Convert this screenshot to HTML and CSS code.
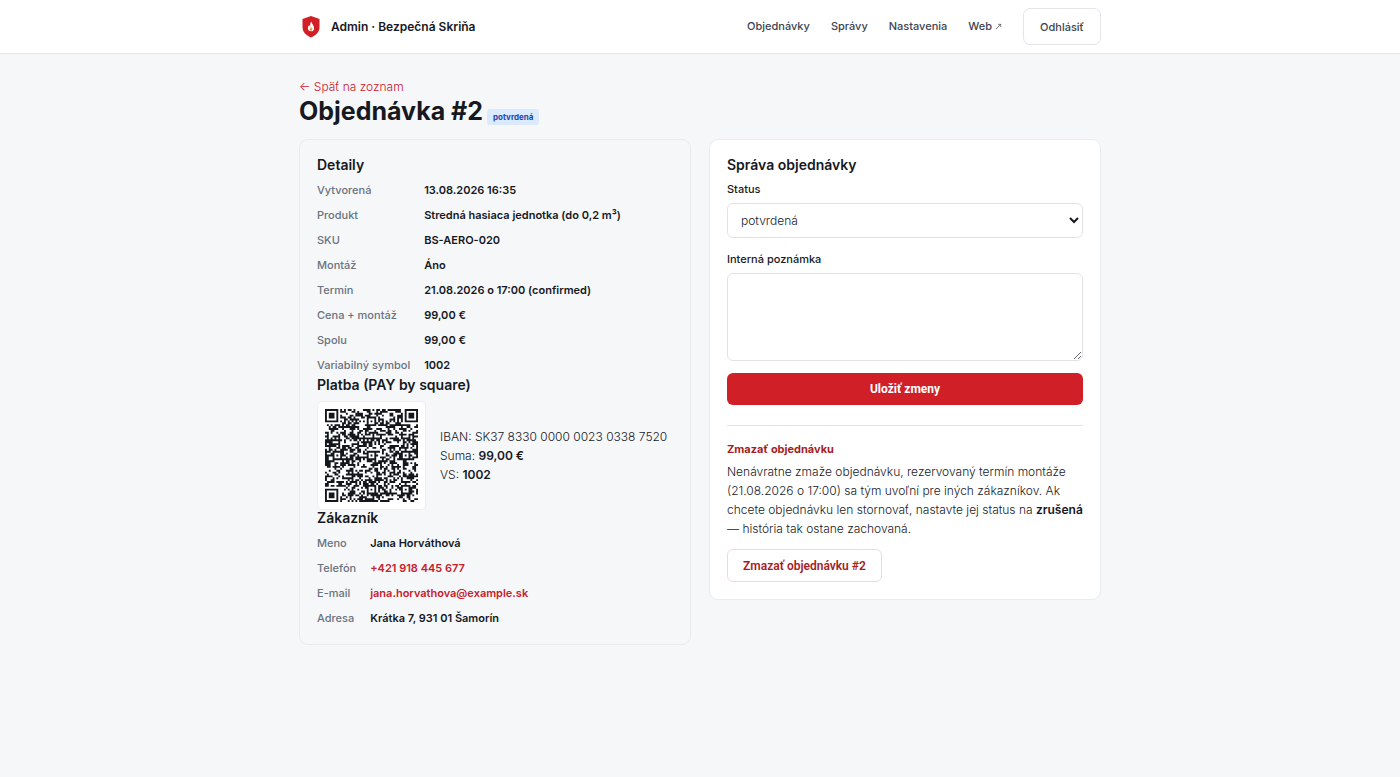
FILE: index.html
```html
<!DOCTYPE html>
<html lang="sk">
<head>
<meta charset="utf-8">
<meta name="viewport" content="width=device-width, initial-scale=1">
<title>Objednávka #2 – Admin · Bezpečná Skriňa</title>
<link rel="stylesheet" href="styles.css">
</head>
<body>
<header class="topbar">
  <div class="container topbar-inner">
    <a class="brand" href="#">
      <svg class="brand-mark" viewBox="0 0 24 24" aria-hidden="true">
        <path fill="#d01f27" d="M12 1 20.500 4V12c0 5.500-4 8.500-8.500 10.500C7.500 20.500 3.500 17.500 3.500 12V4Z"/>
        <path fill="#fff" d="M12.200 6.500c.4 2.200 2.900 3.800 2.900 6.700a3.100 3.100 0 0 1-6.200.1c0-1.500.6-2.400 1.300-3.200.2.800.5 1.200.9 1.500.2-1.900.1-3.500 1.100-5.100Z"/>
        <path fill="#f0a05a" d="M12.100 11.800c.3 1 1.300 1.600 1.300 2.700a1.400 1.400 0 0 1-2.800 0c0-1.100 1.100-1.700 1.500-2.700Z"/>
      </svg>
      <span>Admin · Bezpečná Skriňa</span>
    </a>
    <nav class="nav">
      <a href="#">Objednávky</a>
      <a href="#">Správy</a>
      <a href="#">Nastavenia</a>
      <a class="nav-web" href="#">Web
        <svg class="nav-arrow" viewBox="0 0 8 8" aria-hidden="true"><path d="M1 7 6.500 1.500M3.500 1.500h3v3" fill="none" stroke="currentColor" stroke-width=".8"/></svg>
      </a>
      <button class="btn-logout" type="button">Odhlásiť</button>
    </nav>
  </div>
</header>
<main class="container page">
  <a class="back" href="#">← Späť na zoznam</a>
  <div class="title-row">
    <h1>Objednávka #2</h1>
    <span class="badge">potvrdená</span>
  </div>
  <div class="columns">
    <section class="card card-muted">
      <h2>Detaily</h2>
      <dl class="facts">
        <dt>Vytvorená</dt><dd>13.08.2026 16:35</dd>
        <dt>Produkt</dt><dd>Stredná hasiaca jednotka (do 0,2 m³)</dd>
        <dt>SKU</dt><dd>BS-AERO-020</dd>
        <dt>Montáž</dt><dd>Áno</dd>
        <dt>Termín</dt><dd>21.08.2026 o 17:00 (confirmed)</dd>
        <dt>Cena + montáž</dt><dd>99,00 €</dd>
        <dt>Spolu</dt><dd>99,00 €</dd>
        <dt>Variabilný symbol</dt><dd>1002</dd>
      </dl>
      <h2>Platba (PAY by square)</h2>
      <div class="payment">
        <svg class="qr" id="qr" viewBox="0 0 49 49" role="img" aria-label="PAY by square"><path fill="#14171c"/></svg>
        <div class="payment-text">
          <div>IBAN: SK37 8330 0000 0023 0338 7520</div>
          <div>Suma: <strong>99,00 €</strong></div>
          <div>VS: <strong>1002</strong></div>
        </div>
      </div>
      <h2>Zákazník</h2>
      <dl class="facts">
        <dt>Meno</dt><dd>Jana Horváthová</dd>
        <dt>Telefón</dt><dd><a href="#">+421 918 445 677</a></dd>
        <dt>E-mail</dt><dd><a href="#">jana.horvathova@example.sk</a></dd>
        <dt>Adresa</dt><dd>Krátka 7, 931 01 Šamorín</dd>
      </dl>
    </section>
    <section class="card">
      <h2>Správa objednávky</h2>
      <form class="form">
        <label for="status">Status</label>
        <select id="status"><option>potvrdená</option><option>zrušená</option></select>
        <label for="note">Interná poznámka</label>
        <textarea id="note"></textarea>
        <button class="btn-save" type="button">Uložiť zmeny</button>
      </form>
      <div class="danger">
        <h3>Zmazať objednávku</h3>
        <p>Nenávratne zmaže objednávku, rezervovaný termín montáže (21.08.2026 o 17:00) sa tým uvoľní pre iných zákazníkov. Ak chcete objednávku len stornovať, nastavte jej status na <strong>zrušená</strong> — história tak ostane zachovaná.</p>
        <button class="btn-delete" type="button">Zmazať objednávku #2</button>
      </div>
    </section>
  </div>
</main>
<script src="qr.js"></script>
</body>
</html>
```
FILE: styles.css
```css
* { box-sizing: border-box; }
body {
  margin: 0;
  background: #f5f7f9;
  color: #16191f;
  font-family: Inter, "Liberation Sans", sans-serif;
  font-size: 12px;
  font-weight: 300;
  line-height: 19px;
}
a { color: #c8202c; text-decoration: none; }
h1, h2, h3, p, dl, dd { margin: 0; }
button, select, textarea { font-family: inherit; }
.container { width: 100%; max-width: 802px; margin: 0 auto; }

.topbar { background: #fff; border-bottom: 1px solid #e5e7eb; }
.topbar-inner { display: flex; align-items: center; justify-content: space-between; padding: 8px 0; }
.brand { display: flex; align-items: center; gap: 8px; color: #16191f; font-size: 12px; font-weight: 600; }
.brand-mark { width: 24px; height: 24px; }
.nav { display: flex; align-items: center; gap: 21px; font-size: 11px; font-weight: 500; }
.nav a { color: #3d4350; }
.nav-web { display: flex; align-items: center; gap: 3px; }
.nav-arrow { width: 7px; height: 7px; }
.btn-logout {
  height: 37px;
  padding: 0 16px;
  border: 1px solid #e2e5e9;
  border-radius: 7px;
  background: #fff;
  color: #3d4350;
  font-size: 11px;
  font-weight: 500;
}

.page { padding-top: 24px; padding-bottom: 32px; }
.back { display: block; line-height: 18px; }
.title-row { display: flex; align-items: baseline; gap: 4px; margin-bottom: 13px; }
h1 { font-size: 25px; line-height: 30px; font-weight: 700; }
.badge {
  padding: 0 6px;
  border-radius: 3px;
  background: #dbeafe;
  color: #1e46b0;
  font-size: 8px;
  line-height: 16px;
  font-weight: 700;
}

.columns { display: grid; grid-template-columns: 1fr 1fr; gap: 18px; align-items: start; }
.card { padding: 17px; border: 1px solid #e9ecef; border-radius: 9px; background: #fff; }
.card-muted { background: #f5f7f9; }
h2 { margin-bottom: 8px; font-size: 14px; line-height: 16px; font-weight: 600; }
.facts { display: grid; grid-template-columns: max-content 1fr; gap: 8px 14px; padding-top: 1px; font-size: 11px; line-height: 17px; font-weight: 600; }
.facts + h2 { margin-top: 3px; }
.facts dt { color: #6b7280; font-weight: 500; }
.payment { display: flex; align-items: center; gap: 14px; }
strong { font-weight: 600; }
.qr { flex: none; width: 109px; height: 109px; padding: 7px; border: 1px solid #eceef1; border-radius: 5px; background: #fff; }

.form { display: flex; flex-direction: column; }
.form label { margin-bottom: 5px; font-size: 11px; line-height: 17px; font-weight: 500; }
.form select {
  height: 35px;
  margin-bottom: 13px;
  padding: 0 9px;
  border: 1px solid #dfe2e6;
  border-radius: 6px;
  background: #fff;
  color: #16191f;
  font-size: 12px;
  font-weight: 300;
}
.form textarea { height: 88px; border: 1px solid #dfe2e6; border-radius: 6px; resize: vertical; }
.btn-save, .btn-delete { border-radius: 6px; font-family: Roboto, "Liberation Sans", sans-serif; font-size: 12px; }
.btn-save { height: 32px; margin-top: 12px; border: 0; background: #d01f27; color: #fff; font-weight: 700; }
.danger { margin-top: 20px; padding-top: 14px; border-top: 1px solid #e8e2e4; }
h3 { margin-bottom: 3px; color: #a51d24; font-size: 11px; line-height: 19px; font-weight: 700; }
.btn-delete { height: 33px; margin-top: 11px; padding: 0 15px; border: 1px solid #f0d8da; background: #fff; color: #a51d24; font-weight: 600; }
```
FILE: qr.js
```js
// Fills the payment code: 49 modules per side, three finders, six alignment marks.
(function () {
  var size = 49;
  var seed = 1002;
  function next() {
    seed = (seed * 1103515245 + 12345) % 2147483648;
    return seed / 2147483648;
  }
  function ring(dx, dy) { return Math.max(Math.abs(dx), Math.abs(dy)); }
  var finders = [[3, 3], [45, 3], [3, 45]];
  var marks = [[24, 6], [6, 24], [24, 24], [42, 24], [24, 42], [42, 42]];
  function isDark(x, y) {
    var noise = next() < 0.53;
    var i, r;
    for (i = 0; i < finders.length; i++) {
      r = ring(x - finders[i][0], y - finders[i][1]);
      if (r <= 4) return r === 3 || r <= 1;
    }
    for (i = 0; i < marks.length; i++) {
      r = ring(x - marks[i][0], y - marks[i][1]);
      if (r <= 2) return r !== 1;
    }
    if (x === 6 || y === 6) return (x + y) % 2 === 0;
    return noise;
  }
  var d = '';
  for (var y = 0; y < size; y++) {
    for (var x = 0; x < size; x++) {
      if (isDark(x, y)) d += 'M' + x + ' ' + y + 'h1v1h-1z';
    }
  }
  document.querySelector('#qr path').setAttribute('d', d);
})();
```
